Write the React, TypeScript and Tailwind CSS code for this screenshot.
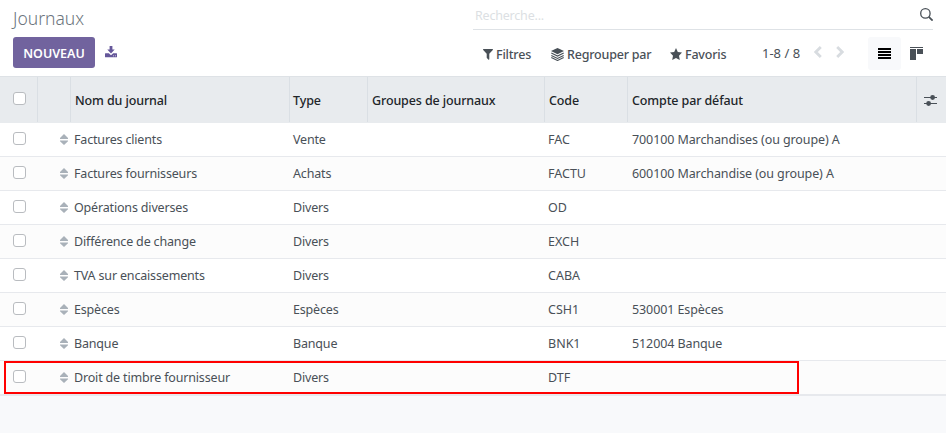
import React from "react";

type Row = { name: string; type: string; code: string; account?: string; marked?: boolean };

const rows: Row[] = [
  { name: "Factures clients", type: "Vente", code: "FAC", account: "700100 Marchandises (ou groupe) A" },
  { name: "Factures fournisseurs", type: "Achats", code: "FACTU", account: "600100 Marchandise (ou groupe) A" },
  { name: "Opérations diverses", type: "Divers", code: "OD" },
  { name: "Différence de change", type: "Divers", code: "EXCH" },
  { name: "TVA sur encaissements", type: "Divers", code: "CABA" },
  { name: "Espèces", type: "Espèces", code: "CSH1", account: "530001 Espèces" },
  { name: "Banque", type: "Banque", code: "BNK1", account: "512004 Banque" },
  { name: "Droit de timbre fournisseur", type: "Divers", code: "DTF", marked: true },
];

const grid = "grid grid-cols-[38px_33px_219px_78px_177px_83px_289px_29px]";

function Checkbox() {
  return <span className="block h-[13px] w-[13px] rounded-[3px] border border-[#b9bcc0] bg-white" />;
}

function SortHandle() {
  return (
    <svg className="h-[11px] w-2" viewBox="0 0 8 11" fill="#a9b1b9">
      <path d="M4 0L8 4V5H0V4zM0 6.5H8V7.2L4 11 0 7.2z" />
    </svg>
  );
}

function DownloadIcon() {
  return (
    <svg className="h-3 w-3" viewBox="0 0 12 12" fill="#65579a" fillRule="evenodd">
      <path d="M4.6 0h2.8v3.6h2.3L6 7.4 2.3 3.6h2.3zM.5 7.2h3.3L6 9.2l2.2-2h3.3q.5 0 .5.5v3q0 .5-.5.5H.5q-.5 0-.5-.5v-3q0-.5.5-.5zM8 9.4v.9h.9v-.9zM10 9.4v.9h.9v-.9z" />
    </svg>
  );
}

function FilterIcon() {
  return (
    <svg className="h-[11px] w-[10px]" viewBox="0 0 10 11" fill="#495057">
      <path d="M.5 0h9q.8.2.3 1L6.3 4.7v5.6q-.2.7-.8.4L3.9 9.1q-.2-.2-.2-.5V4.7L.2 1Q-.3.2.5 0z" />
    </svg>
  );
}

function LayersIcon() {
  return (
    <svg className="h-[13px] w-[13px]" viewBox="0 0 13 13" fill="none" stroke="#495057">
      <path d="M6.5 0L13 3.1 6.5 6.3 0 3.1z" fill="#495057" stroke="none" />
      <path d="M.3 5.1L6.5 8.1l6.2-3M.3 7.4l6.2 3 6.2-3M.3 9.5l6.2 3 6.2-3" strokeWidth="1.1" />
    </svg>
  );
}

function StarIcon() {
  return (
    <svg className="h-[12px] w-3" viewBox="0 0 12 11" fill="#495057" preserveAspectRatio="none">
      <path d="M6 0l1.8 3.7 4.2.5L9 7l.8 4L6 9.1 2.2 11 3 7 0 4.2l4.2-.5z" />
    </svg>
  );
}

function SearchIcon() {
  return (
    <svg className="h-[13px] w-[13px]" viewBox="0 0 13 13" fill="none" stroke="#495057">
      <circle cx="5.4" cy="5.4" r="4.7" strokeWidth="1.3" />
      <path d="M8.8 8.8l3.8 3.8" strokeWidth="1.8" />
    </svg>
  );
}

function Chevron({ right = false }: { right?: boolean }) {
  return (
    <svg className="h-3 w-2" viewBox="0 0 8 12" fill="none" stroke="#d8dce0" strokeWidth="2.8">
      <path d={right ? "M1.2 1l5 5-5 5" : "M6.8 1l-5 5 5 5"} />
    </svg>
  );
}

function ListIcon() {
  return (
    <svg className="h-[11px] w-[13px]" viewBox="0 0 13 11" fill="#000">
      <path d="M0 0h13v2H0zM0 3h13v2H0zM0 6h13v2H0zM0 9h13v2H0z" />
    </svg>
  );
}

function KanbanIcon() {
  return (
    <svg className="h-[13px] w-[13px]" viewBox="0 0 13 13" fill="#495057">
      <path d="M0 0h13v1H0zM0 2h6v11H0zM7 2h6v5H7z" />
    </svg>
  );
}

function SlidersIcon() {
  return (
    <svg className="h-[11px] w-[13px]" viewBox="0 0 13 11" fill="#495057">
      <path d="M0 2h13v1H0zM0 8h13v1H0z" />
      <circle cx="8.6" cy="2.5" r="2.4" />
      <circle cx="4.6" cy="8.5" r="2.4" />
    </svg>
  );
}

function HeadCell({ children, last = false }: { children?: React.ReactNode; last?: boolean }) {
  return (
    <div className={`flex h-[45px] items-start pt-[15px] pl-1 ${last ? "" : "border-r border-[#dadfe4]"}`}>{children}</div>
  );
}

export default function App() {
  return (
    <div className="h-[433px] w-[946px] overflow-hidden bg-[#f8f9fb] font-['Noto_Sans','Open_Sans',sans-serif] text-[12.5px] leading-[18px] whitespace-nowrap text-[#495057]">
      <header className="h-[76px] bg-white">
        <div className="flex h-[37px] justify-between pr-[13px] pl-[13px]">
          <h1 className="pt-[7px] text-[17.5px] leading-[22px] font-light text-[#6c757d]">Journaux</h1>
          <div className="flex h-[30px] w-[460px] items-start justify-between border-b border-[#dee2e6]">
            <span className="pt-[7px] pl-[2px] tracking-[-0.2px] text-[#dcdfe3]">Recherche...</span>
            <span className="pt-2"><SearchIcon /></span>
          </div>
        </div>
        <div className="flex h-[33px] items-start pl-[13px]">
          <button className="h-[31px] w-[82px] rounded-[3px] bg-[#71639e] pt-0.5 text-[12.5px] font-semibold text-white">NOUVEAU</button>
          <span className="ml-[10px] pt-[9px]"><DownloadIcon /></span>
          <nav className="ml-[366px] flex h-[34px] items-center font-medium tracking-[-0.2px]">
            <span className="flex w-[68px] items-center gap-[3px]"><FilterIcon /><span className="pt-0.5">Filtres</span></span>
            <span className="flex w-[119px] items-center gap-[3px]"><LayersIcon /><span className="pt-0.5">Regrouper par</span></span>
            <span className="flex w-[92px] items-center gap-[3px]"><StarIcon /><span className="pt-0.5">Favoris</span></span>
          </nav>
          <span className="w-[52px] pt-[7px] text-[13px]">1-8 / 8</span>
          <span className="flex gap-[14px] pt-[9px]"><Chevron /><Chevron right /></span>
          <span className="ml-6 flex h-[33px] w-[33px] items-center justify-center rounded-[3px] bg-[#f8f9fb]"><ListIcon /></span>
          <span className="ml-[9px] pt-[10px]"><KanbanIcon /></span>
        </div>
      </header>

      <main className="relative">
        <div className={`${grid} h-[47px] border-t border-[#dee2e6] bg-[#e8ebee] font-medium tracking-[-0.12px] text-[#212529]`}>
          <HeadCell><span className="pl-[9px]"><Checkbox /></span></HeadCell>
          <HeadCell />
          <HeadCell>Nom du journal</HeadCell>
          <HeadCell><span className="-ml-px">Type</span></HeadCell>
          <HeadCell>Groupes de journaux</HeadCell>
          <HeadCell>Code</HeadCell>
          <HeadCell>Compte par défaut</HeadCell>
          <HeadCell last><span className="pt-[3px] pl-[3px]"><SlidersIcon /></span></HeadCell>
        </div>
        {rows.map((row, i) => (
          <div
            key={row.name}
            className={`${grid} relative h-[34px] items-center border-b border-[#e7e9ed] ${i % 2 ? "bg-[#fcfcfc]" : "bg-white"}`}
          >
            <span className="pb-0.5 pl-[13px]"><Checkbox /></span>
            <span className="flex justify-end pr-[3px]"><SortHandle /></span>
            <span className="pl-[3px] tracking-[-0.17px]">{row.name}</span>
            <span className="pl-[3px] tracking-[-0.17px]">{row.type}</span>
            <span />
            <span className="pl-[3px]">{row.code}</span>
            <span className="pl-1 tracking-[-0.1px]">{row.account}</span>
            {row.marked && <div className="absolute top-0 left-1 h-[33px] w-[795px] border-2 border-[#f00]" />}
          </div>
        ))}
        <div className="h-px bg-[#e7e9ed]" />
      </main>
    </div>
  );
}
